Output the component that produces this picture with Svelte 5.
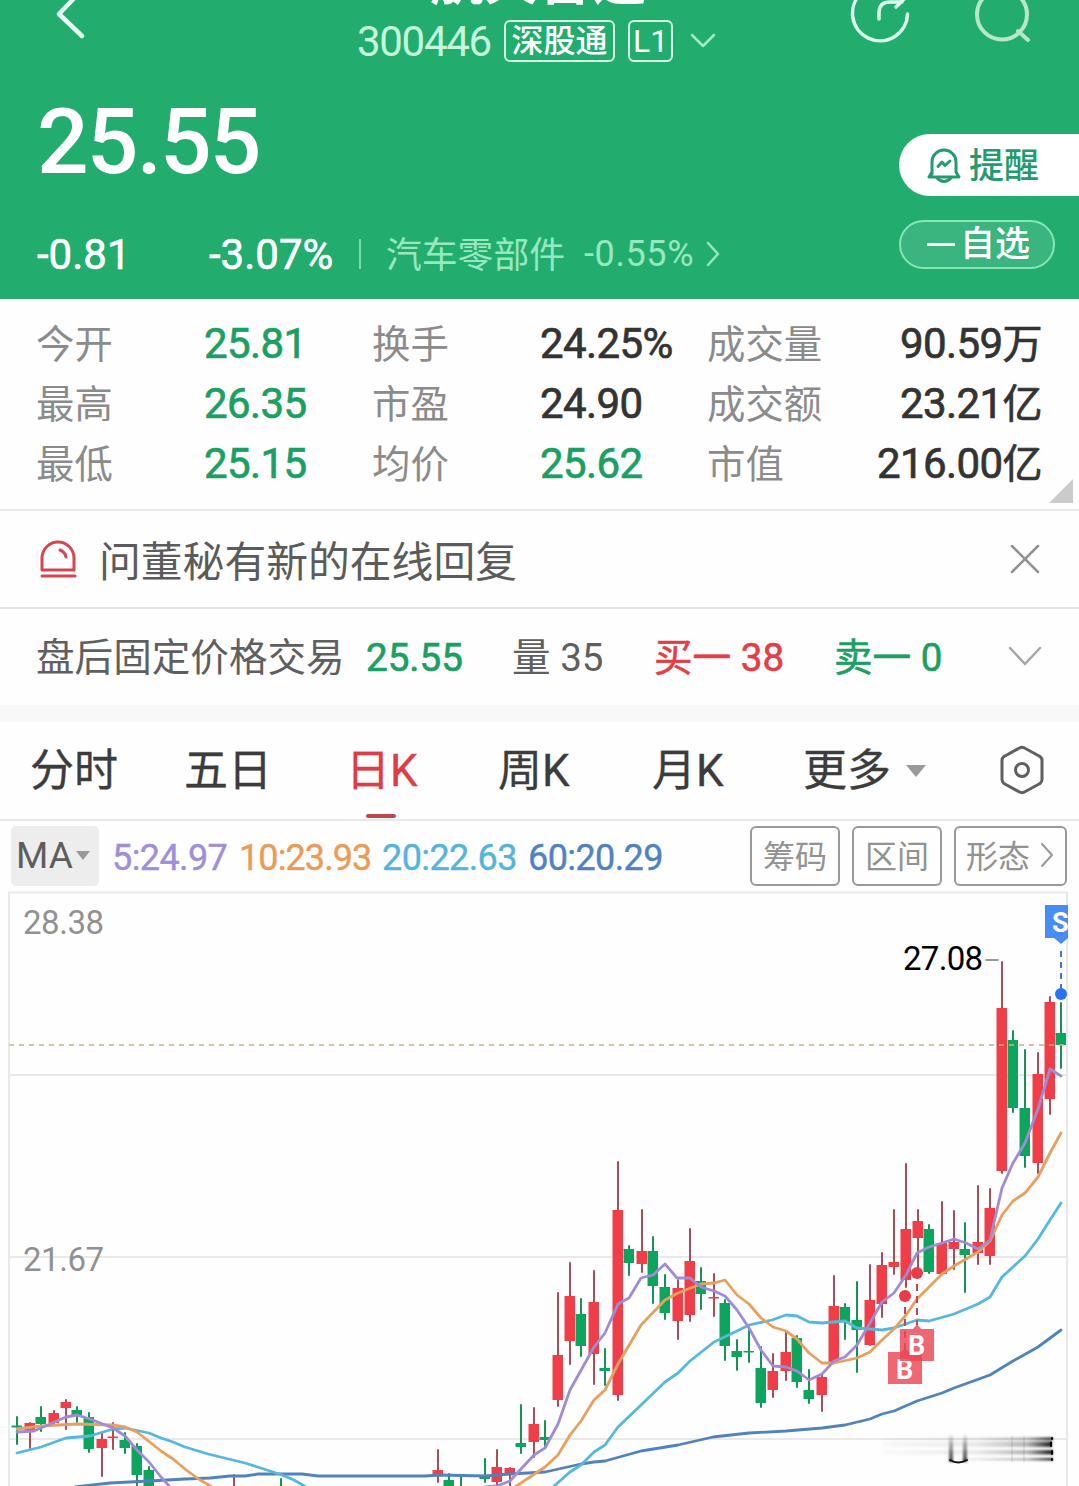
<script>
	const stats = [
		[
			{ label: '今开', value: '25.81', tone: 'down' },
			{ label: '换手', value: '24.25%' },
			{ label: '成交量', value: '90.59', unit: '万' }
		],
		[
			{ label: '最高', value: '26.35', tone: 'down' },
			{ label: '市盈', value: '24.90' },
			{ label: '成交额', value: '23.21', unit: '亿' }
		],
		[
			{ label: '最低', value: '25.15', tone: 'down' },
			{ label: '均价', value: '25.62', tone: 'down' },
			{ label: '市值', value: '216.00', unit: '亿' }
		]
	];

	const tabs = ['分时', '五日', '日K', '周K', '月K'];
	let activeTab = '日K';

	const averages = [
		{ cls: 'ma5', text: '5:24.97' },
		{ cls: 'ma10', text: '10:23.93' },
		{ cls: 'ma20', text: '20:22.63' },
		{ cls: 'ma60', text: '60:20.29' }
	];

	// x, high, low, body top, body bottom, rising
	const candles = [
		[17, 1417, 1444, 1425.5, 1427.5, 0],
		[30, 1423, 1448, 1423, 1430, 1],
		[41, 1407, 1431, 1417, 1424, 0],
		[54, 1411, 1425, 1413, 1423, 1],
		[66, 1400, 1429, 1402, 1408, 1],
		[77, 1407, 1422, 1410, 1415, 0],
		[89, 1413, 1452, 1417, 1449, 0],
		[102, 1433, 1476, 1439, 1448, 1],
		[113, 1423, 1449, 1436.5, 1438, 1],
		[125, 1433, 1453, 1440, 1448, 0],
		[137, 1444, 1490, 1446, 1475, 0],
		[149, 1467, 1490, 1470, 1490, 0],
		[234, 1475, 1490, 1488, 1490, 1],
		[281, 1479, 1490, 1488, 1490, 0],
		[438, 1450, 1482, 1470, 1475, 1],
		[449, 1474, 1490, 1480, 1490, 0],
		[461, 1477, 1490, 1488, 1490, 0],
		[485, 1459, 1482, 1475, 1479, 0],
		[497, 1450, 1486, 1467, 1482, 1],
		[510, 1468, 1487, 1468, 1473, 1],
		[521, 1405, 1453, 1443, 1447, 0],
		[534, 1408, 1457, 1424, 1442, 1],
		[545, 1421, 1448, 1437, 1440, 0],
		[558, 1293, 1406, 1355, 1400, 1],
		[570, 1263, 1364, 1296, 1341, 1],
		[581, 1299, 1356, 1314, 1346, 0],
		[594, 1271, 1384, 1302, 1354, 1],
		[605, 1349, 1385, 1368, 1371, 0],
		[618, 1162, 1400, 1210, 1395, 1],
		[629, 1246, 1275, 1249, 1263, 0],
		[642, 1210, 1272, 1251, 1264, 1],
		[653, 1237, 1303, 1251, 1286, 0],
		[665, 1275, 1319, 1287, 1313, 0],
		[678, 1280, 1339, 1288, 1321, 1],
		[690, 1229, 1321, 1261, 1315, 1],
		[701, 1268, 1309, 1281, 1294, 0],
		[714, 1274, 1316, 1297, 1298.5, 1],
		[725, 1300, 1360, 1303, 1346, 0],
		[737, 1340, 1370, 1351, 1357, 0],
		[749, 1327, 1362, 1351, 1352.5, 0],
		[761, 1347, 1407, 1368, 1403, 0],
		[773, 1354, 1397, 1371, 1390, 1],
		[786, 1332, 1380, 1352, 1371, 1],
		[797, 1336, 1387, 1338, 1382, 0],
		[809, 1370, 1403, 1390, 1399, 0],
		[822, 1375, 1411, 1377, 1395, 1],
		[834, 1276, 1362, 1306, 1362, 1],
		[845, 1304, 1339, 1307, 1322, 0],
		[857, 1282, 1372, 1320, 1330, 0],
		[870, 1265, 1345, 1300, 1345, 1],
		[882, 1253, 1317, 1265, 1304, 1],
		[894, 1210, 1274, 1262, 1267, 1],
		[906, 1164, 1287, 1229, 1280, 1],
		[918, 1210, 1267, 1221, 1238, 1],
		[929, 1225, 1273, 1229, 1272, 0],
		[942, 1202, 1274, 1243, 1274, 1],
		[954, 1211, 1269, 1242, 1249, 1],
		[965, 1223, 1292, 1249, 1255, 0],
		[978, 1186, 1264, 1242, 1253, 1],
		[990, 1189, 1264, 1208, 1256, 1],
		[1002, 962, 1173, 1008, 1171, 1],
		[1013, 1031, 1112, 1040, 1108, 0],
		[1025, 1050, 1167, 1108, 1156, 0],
		[1038, 1053, 1173, 1074, 1163, 1],
		[1050, 997, 1114, 1002, 1099, 1],
		[1061, 1003, 1068, 1033, 1045, 0]
	];

	const lines = [
		{
			cls: 'ma60',
			points:
				'75,1487 110,1483 149,1481 185,1479 210,1478 230,1476 245,1476 258,1474 302,1474 318,1476 425,1476 440,1475 485,1476 510,1474 545,1472 581,1464 594,1462 605,1461 641,1451 678,1445 713,1437 749,1433 786,1431 822,1428 845,1425 870,1419 882,1414 894,1411 917,1401 942,1393 954,1388 990,1375 1013,1361 1038,1347 1061,1330'
		},
		{
			cls: 'ma20',
			points:
				'17,1453 41,1447 66,1438 90,1436 113,1429 125,1428 149,1433 161,1438 173,1442 185,1447 208,1454 245,1463 270,1471 282,1475 294,1480 306,1487'
		},
		{
			cls: 'ma20',
			points:
				'553,1487 570,1472 581,1465 594,1452 605,1445 618,1427 641,1405 665,1382 678,1373 690,1361 714,1342 737,1331 749,1325 772,1320 786,1315 797,1316 809,1322 822,1323 845,1321 857,1328 882,1330 894,1328 917,1320 929,1321 954,1314 978,1304 990,1297 1002,1277 1025,1256 1038,1239 1050,1220 1061,1203'
		},
		{
			cls: 'ma10',
			points:
				'17,1429 41,1426 77,1424 113,1425 125,1427 137,1432 161,1451 173,1459 185,1469 197,1478 212,1487'
		},
		{
			cls: 'ma10',
			points:
				'515,1487 530,1477 545,1467 558,1455 570,1435 581,1421 594,1400 605,1390 618,1364 641,1325 665,1300 678,1293 701,1284 714,1283 725,1280 737,1295 749,1304 761,1318 773,1327 786,1331 797,1339 809,1353 822,1363 834,1363 857,1358 870,1352 882,1340 894,1329 906,1315 917,1299 942,1274 954,1266 978,1252 990,1241 1002,1215 1013,1201 1025,1193 1038,1177 1050,1153 1061,1133'
		},
		{
			cls: 'ma5',
			points:
				'17,1432 34,1431 66,1417 77,1415 90,1419 113,1428 125,1436 137,1450 149,1462 161,1477 170,1487'
		},
		{
			cls: 'ma5',
			points:
				'485,1487 497,1486 510,1481 521,1469 534,1455 545,1448 558,1424 570,1390 594,1347 605,1333 618,1304 629,1298 641,1278 653,1275 665,1264 677,1278 690,1278 701,1287 714,1291 725,1296 737,1310 749,1328 761,1350 773,1366 786,1367 797,1371 809,1380 822,1374 834,1361 845,1357 857,1345 870,1323 882,1302 894,1293 906,1275 917,1253 929,1247 942,1243 954,1239 966,1243 978,1249 990,1240 1002,1188 1013,1163 1025,1143 1038,1109 1050,1069 1061,1076'
		}
	];
</script>

<div class="page">
	<header>
		<nav>
			<svg class="back" width="40" height="68" viewBox="50 0 40 68">
				<path d="M82 -10 L59 14 L82 36" />
			</svg>
			<div class="heading">
				<h1>航天智造</h1>
				<div class="code">
					<span class="num">300446</span>
					<span class="tag wide">深股通</span>
					<span class="tag">L1</span>
					<svg width="26" height="16" viewBox="0 0 26 16"><path d="M2 2 L13 13 L24 2" /></svg>
				</div>
			</div>
			<svg class="actions" width="200" height="68" viewBox="840 0 200 68">
				<path d="M862 -7.500 A27.500 27.500 0 1 0 907.500 14" />
				<path d="M879 19 V13 Q879 2 890 2 H902 M896 7 L904 -1" />
				<g class="search">
					<circle cx="1002" cy="14.500" r="25" />
					<path d="M1018 31 L1028 40" />
				</g>
			</svg>
		</nav>

		<div class="quote">
			<div class="left">
				<div class="price">25.55</div>
				<div class="change">
					<span class="delta">-0.81</span>
					<span class="percent">-3.07%</span>
					<i></i>
					<span class="sector">汽车零部件</span>
					<span class="sector-change">-0.55%</span>
					<svg width="16" height="28" viewBox="0 0 16 28"><path d="M3 3 L13 14 L3 25" /></svg>
				</div>
			</div>
			<div class="right">
				<button class="remind">
					<svg width="36" height="38" viewBox="0 0 36 38">
						<path d="M6 28 V16 A12 12 0 0 1 30 16 V26 L33 31 H3 L6 26" />
						<path d="M11 32 Q18 39 25 32 M12 20.500 L16 16 L19 19.500 L24 15" />
					</svg>
					<span>提醒</span>
				</button>
				<button class="watch"><i></i><span>自选</span></button>
			</div>
		</div>
	</header>

	<section class="stats">
		{#each stats as row}
			<div class="row">
				{#each row as item}
					<span class="label">{item.label}</span>
					<span class="value {item.tone ?? ''}">{item.value}<b>{item.unit ?? ''}</b></span>
				{/each}
			</div>
		{/each}
		<div class="corner"></div>
	</section>

	<section class="notice">
		<svg width="40" height="40" viewBox="0 0 40 40">
			<path d="M4 31 V19 A16 16 0 0 1 36 19 V31 Z M4 37 H37" />
			<path d="M22 11 Q27 13 28 18" />
		</svg>
		<span>问董秘有新的在线回复</span>
		<svg class="close" width="30" height="30" viewBox="0 0 30 30"><path d="M2 2 L28 28 M28 2 L2 28" /></svg>
	</section>

	<section class="after">
		<span class="name">盘后固定价格交易</span>
		<span class="fixed down">25.55</span>
		<span class="volume">量 35</span>
		<span class="buy">买一 38</span>
		<span class="sell down">卖一 0</span>
		<svg width="34" height="22" viewBox="0 0 34 22"><path d="M2 2 L17 18 L32 2" /></svg>
	</section>

	<div class="tabs">
		{#each tabs as tab}
			<button class:active={tab === activeTab} on:click={() => (activeTab = tab)}>{tab}</button>
		{/each}
		<button class="more">更多<i></i></button>
		<svg width="46" height="50" viewBox="0 0 46 50">
			<path d="M20.500 3 Q23 1.700 25.500 3 L41 11.500 Q43 13 43 15.500 V34.500 Q43 37 41 38.500 L25.500 47 Q23 48.300 20.500 47 L5 38.500 Q3 37 3 34.500 V15.500 Q3 13 5 11.500 Z" />
			<circle cx="23" cy="25" r="6.500" />
		</svg>
	</div>

	<div class="indicators">
		<button class="ma">MA<i></i></button>
		{#each averages as avg}
			<span class={avg.cls}>{avg.text}</span>
		{/each}
		<div class="tools">
			<button>筹码</button>
			<button>区间</button>
			<button class="shape">形态
				<svg width="14" height="26" viewBox="0 0 14 26"><path d="M2 2 L12 13 L2 24" /></svg>
			</button>
		</div>
	</div>

	<svg class="chart" width="1079" height="596" viewBox="0 890 1079 596">
		<defs>
			<linearGradient id="fade">
				<stop offset="0" stop-color="#000" stop-opacity="0.02" />
				<stop offset="0.55" stop-color="#000" stop-opacity="0.08" />
				<stop offset="0.85" stop-color="#000" stop-opacity="0.28" />
				<stop offset="1" stop-color="#000" stop-opacity="0.9" />
			</linearGradient>
			<linearGradient id="drop" x2="0" y2="1">
				<stop offset="0" stop-color="#000" stop-opacity="0" />
				<stop offset="1" stop-color="#000" stop-opacity="0.75" />
			</linearGradient>
			<filter id="soft" x="-5%" y="-20%" width="110%" height="140%">
				<feGaussianBlur stdDeviation="0.8" />
			</filter>
			<clipPath id="frame"><rect x="9" y="890" width="1059" height="596" /></clipPath>
		</defs>

		<rect class="grid" x="9" y="892.500" width="1058" height="700" />
		<path class="grid" d="M9 1075 H1067 M9 1257 H1067 M9 1439 H1067" />

		{#each candles as [x, high, low, top, bottom, up]}
			<g class={up ? 'rise' : 'fall'}>
				<line x1={x} x2={x} y1={high} y2={low} />
				<rect x={x - 5.5} y={top} width="10.500" height={bottom - top} />
			</g>
		{/each}
		<path class="current" d="M9 1045 H1067" />

		{#each lines as line}
			<polyline class={line.cls} points={line.points} />
		{/each}

		<text class="axis" x="23" y="934" textLength="81">28.38</text>
		<text class="axis" x="23" y="1271" textLength="81">21.67</text>
		<text class="peak" x="903" y="970" textLength="80">27.08</text>
		<path class="peak-line" d="M986 960 H998" />

		<g clip-path="url(#frame)">
			<path class="sell-flag" d="M1045 905 H1080 V938 H1068 L1061 944 L1054 938 H1045 Z" />
			<text class="mark" x="1052" y="932">S</text>
			<path class="sell-dash" d="M1061 951 V988" />
			<circle class="sell-dot" cx="1061" cy="994" r="6" />
		</g>

		<g class="buy-mark">
			<path class="dash" d="M905 1307 V1352 M917 1284 V1325" />
			<circle cx="905" cy="1296" r="6" />
			<circle cx="917" cy="1273" r="6" />
			<path class="flag" d="M888 1352 H901 L905 1348 L909 1352 H922 V1384 H888 Z" />
			<text class="mark" x="896" y="1379">B</text>
			<path class="flag" d="M900 1329 H913 L917 1324 L921 1329 H934 V1361 H900 Z" />
			<text class="mark" x="908" y="1355">B</text>
		</g>

		<g class="smudge">
			<g filter="url(#soft)">
				<path d="M883 1437.500 H1053 V1440 H883 Z M883 1441.500 H1052 V1447 H883 Z M883 1450 H1053 V1454.500 H883 Z M960 1458 H1053 V1460.500 H960 Z" fill="url(#fade)" />
				<rect x="949" y="1433" width="4" height="29" fill="url(#drop)" />
				<rect x="963" y="1433" width="4" height="29" fill="url(#drop)" />
			</g>
			<path d="M950 1460 Q958 1465 967 1460" fill="none" stroke="#111" stroke-width="2" />
			<path d="M1052 1438 V1439 M1051 1442.500 V1446 M1052 1451 V1454 M1052 1459 V1460" stroke="#000" stroke-width="2" />
			<path d="M1012 1436 V1462 M1024 1436 V1462" stroke="#000" stroke-opacity="0.14" />
		</g>
	</svg>
</div>

<style>
	:global(body) {
		margin: 0;
		background: #fff;
	}

	.page {
		width: 1079px;
		height: 1486px;
		overflow: hidden;
		background: #fefefe;
		font-family: Roboto, 'Noto Sans CJK SC', sans-serif;
		color: #333;
	}

	button {
		margin: 0;
		padding: 0;
		border: none;
		background: none;
		font: inherit;
		color: inherit;
	}

	svg {
		display: block;
		flex: none;
		fill: none;
		stroke-linecap: round;
		stroke-linejoin: round;
	}

	span {
		white-space: nowrap;
	}

	header {
		height: 299px;
		background: #22ad6f;
		color: #fff;
	}

	nav {
		display: grid;
		grid-template-columns: 308px 450px 1fr;
		height: 68px;
		overflow: hidden;
	}

	.back {
		margin-left: 50px;
		stroke: #e8fff4;
		stroke-width: 4.5;
	}

	.heading {
		display: flex;
		flex-direction: column;
		justify-content: flex-end;
		height: 68px;
	}

	h1 {
		margin: 0 0 5px 122px;
		font-size: 54px;
		font-weight: 700;
		line-height: 54px;
		white-space: nowrap;
	}

	.code {
		display: flex;
		align-items: center;
		flex: none;
		height: 54px;
		padding: 0 0 0 49px;
		gap: 13px;
	}

	.code .num {
		width: 134px;
		color: #c5f7dc;
		font-size: 42px;
		letter-spacing: -1.3px;
	}

	.code .tag {
		box-sizing: border-box;
		width: 45px;
		height: 42px;
		border: 2px solid #d5fbe8;
		border-radius: 6px;
		font-size: 32px;
		line-height: 38px;
		text-align: center;
	}

	.code .wide {
		width: 111px;
		font-weight: 500;
	}

	.code svg {
		margin-left: 4px;
		stroke: #a5ebc8;
		stroke-width: 2.5;
	}

	.actions {
		margin-left: 82px;
		stroke: #dcfff0;
		stroke-width: 3.5;
	}

	.search {
		stroke: #b8e6c9;
		stroke-width: 4;
	}

	.quote {
		display: flex;
		justify-content: space-between;
		height: 231px;
	}

	.price {
		height: 146px;
		padding-left: 37px;
		font-size: 91px;
		font-weight: 500;
		line-height: 148px;
		letter-spacing: -1.9px;
	}

	.change {
		display: flex;
		align-items: center;
		height: 80px;
		padding-left: 37px;
		font-size: 42px;
	}

	.delta,
	.percent {
		-webkit-text-stroke: 0.6px currentColor;
	}

	.delta {
		width: 172px;
	}

	.percent {
		width: 150px;
	}

	.change i {
		width: 2px;
		height: 30px;
		margin-right: 25px;
		background: #7cdcab;
	}

	.sector {
		width: 198px;
		padding-bottom: 4px;
		color: #98e8bf;
		font-size: 35.8px;
	}

	.sector-change {
		width: 121px;
		color: #98e8bf;
		font-size: 36px;
		letter-spacing: 0.6px;
	}

	.change svg {
		stroke: #98e8bf;
		stroke-width: 2.5;
	}

	.right {
		width: 180px;
		padding-top: 66px;
	}

	.remind {
		display: flex;
		align-items: center;
		width: 180px;
		height: 62px;
		padding-left: 27px;
		gap: 7px;
		border-radius: 31px 0 0 31px;
		background: #fff;
		color: #239b6e;
		font-size: 35px;
		font-weight: 500;
	}

	.remind span {
		padding-bottom: 5px;
	}

	.remind svg {
		stroke: #239b6e;
		stroke-width: 3;
	}

	.watch {
		display: flex;
		align-items: center;
		box-sizing: border-box;
		width: 156px;
		height: 49px;
		margin-top: 24px;
		padding-left: 26px;
		gap: 5px;
		border: 2px solid #86e6b6;
		border-radius: 25px;
		background: #3bb580;
		font-size: 35px;
		font-weight: 500;
		line-height: 49px;
	}

	.watch i {
		width: 28px;
		height: 3px;
		background: #fff;
	}

	.stats {
		position: relative;
		box-sizing: border-box;
		height: 212px;
		padding: 14px 37px 0 36px;
		border-bottom: 2px solid #e9e9e9;
	}

	.row {
		display: grid;
		grid-template-columns: 168px 168px 168px 167px 130px 1fr;
		align-items: center;
		height: 60px;
	}

	.label {
		padding-bottom: 7px;
		color: #8b8b8b;
		font-size: 38.4px;
	}

	.value {
		font-size: 42px;
		line-height: 60px;
		letter-spacing: -0.6px;
		-webkit-text-stroke: 0.7px currentColor;
	}

	.value:last-child {
		text-align: right;
	}

	.value b {
		font-size: 40px;
		font-weight: 400;
	}

	.value.down {
		color: #1c9f62;
	}

	.corner {
		position: absolute;
		right: 6px;
		bottom: 6px;
		border: solid transparent;
		border-width: 12px;
		border-right-color: #cbcbcb;
		border-bottom-color: #cbcbcb;
	}

	.notice {
		display: flex;
		align-items: center;
		box-sizing: border-box;
		height: 98px;
		padding: 0 39px 0 38px;
		border-bottom: 2px solid #e3e3e3;
		color: #5b5b5b;
		font-size: 41.8px;
	}

	.notice span {
		margin-left: 21px;
		padding-bottom: 1px;
	}

	.notice svg {
		stroke: #d44750;
		stroke-width: 3;
	}

	.notice .close {
		margin-left: auto;
		stroke: #919191;
		stroke-width: 2.5;
	}

	.after {
		display: flex;
		align-items: center;
		height: 96px;
		padding: 0 0 0 36px;
		border-bottom: 17px solid #f8f8f8;
		color: #5f5f5f;
		font-size: 38.6px;
	}

	.after span {
		padding-bottom: 6px;
	}

	.name {
		width: 330px;
	}

	.after .fixed {
		width: 146px;
		padding-bottom: 0;
		-webkit-text-stroke: 0.7px currentColor;
	}

	.volume {
		width: 142px;
	}

	.buy {
		width: 180px;
		color: #e33e47;
		-webkit-text-stroke: 0.6px currentColor;
	}

	.sell {
		width: 174px;
		-webkit-text-stroke: 0.6px currentColor;
	}

	.down {
		color: #1c9f62;
	}

	.after svg {
		stroke: #a6a6a6;
		stroke-width: 2.5;
	}

	.tabs {
		display: flex;
		box-sizing: border-box;
		height: 99px;
		padding-left: 30px;
		border-bottom: 2px solid #e9e9e9;
		font-size: 44px;
		line-height: 98px;
		color: #3c3c3c;
		-webkit-text-stroke: 0.3px currentColor;
	}

	.tabs button {
		position: relative;
		width: 154px;
		text-align: left;
		white-space: nowrap;
	}

	.tabs button:nth-child(3) {
		width: 160px;
		padding-left: 8px;
	}

	.tabs .active {
		color: #de3c47;
	}

	.tabs .active::after {
		content: '';
		position: absolute;
		left: 28px;
		bottom: 1px;
		width: 30px;
		height: 4px;
		border-radius: 2px;
		background: #c0474f;
	}

	.tabs .more {
		display: flex;
		align-items: center;
		width: 196px;
		margin-left: -3px;
		gap: 15px;
	}

	.more i,
	.ma i {
		border: solid transparent;
		border-width: 12px 10px 0;
		border-top-color: #999;
	}

	.tabs svg {
		margin-top: 23px;
		stroke: #606060;
		stroke-width: 3;
	}

	.indicators {
		display: flex;
		align-items: center;
		height: 69px;
		padding: 0 12px 0 11px;
		font-size: 36px;
	}

	.indicators button {
		box-sizing: border-box;
		height: 60px;
	}

	.ma {
		display: flex;
		align-items: center;
		width: 88px;
		margin-right: 13px;
		padding-left: 5px;
		gap: 3px;
		border-radius: 5px;
		background: #ededed;
		color: #5d5d5d;
		font-size: 37px;
	}

	.ma i {
		border-width: 9px 7px 0;
	}

	.indicators span {
		padding-top: 4px;
		letter-spacing: -0.6px;
		-webkit-text-stroke: 0.4px currentColor;
	}

	.indicators .ma5 {
		width: 127px;
		color: #a08ed8;
	}

	.indicators .ma10 {
		width: 143px;
		letter-spacing: -0.9px;
		color: #eb9b55;
	}

	.indicators .ma20 {
		width: 146px;
		color: #55b4dc;
	}

	.indicators .ma60 {
		color: #5082c3;
	}

	.tools {
		display: flex;
		margin-left: auto;
		gap: 12px;
		font-size: 32px;
		color: #929292;
	}

	.tools button {
		width: 90px;
		padding-bottom: 4px;
		border: 2px solid #999;
		border-radius: 6px;
	}

	.tools .shape {
		display: flex;
		align-items: center;
		width: 113px;
		padding-left: 10px;
		gap: 10px;
	}

	.tools svg {
		margin-top: 3px;
		stroke: #999;
		stroke-width: 2;
	}

	.chart .grid {
		stroke: #e9e9e9;
		stroke-width: 2;
	}

	.rise rect {
		fill: #ef3e47;
	}

	.rise line {
		stroke: #ac4c57;
		stroke-width: 2;
	}

	.fall rect {
		fill: #0da55e;
	}

	.fall line {
		stroke: #159258;
		stroke-width: 2;
	}

	.current {
		stroke: #c8b482;
		stroke-width: 1.5;
		stroke-dasharray: 5 5;
		stroke-linecap: butt;
	}

	polyline {
		stroke-width: 2.8;
	}

	polyline.ma5 {
		stroke: #a08cd4;
	}

	polyline.ma10 {
		stroke: #e6a05f;
	}

	polyline.ma20 {
		stroke: #55b8dc;
	}

	polyline.ma60 {
		stroke: #5082be;
	}

	.axis {
		fill: #919191;
		font-size: 33px;
	}

	.peak {
		fill: #000;
		font-size: 33px;
	}

	.peak-line {
		stroke: #777;
		stroke-width: 1.5;
	}

	.sell-flag {
		fill: #4a8cf5;
	}

	.sell-dot {
		fill: #2873eb;
	}

	.sell-dash {
		stroke: #4678c8;
		stroke-width: 2;
		stroke-dasharray: 6 5;
		stroke-linecap: butt;
	}

	.mark {
		fill: #fff;
		font-size: 27px;
		font-weight: 700;
	}

	.buy-mark circle {
		fill: #e83c46;
	}

	.buy-mark .dash {
		stroke: #b94b55;
		stroke-width: 2;
		stroke-dasharray: 7 5;
		stroke-linecap: butt;
	}

	.buy-mark .flag {
		fill: #eb4653;
		fill-opacity: 0.82;
	}
</style>
